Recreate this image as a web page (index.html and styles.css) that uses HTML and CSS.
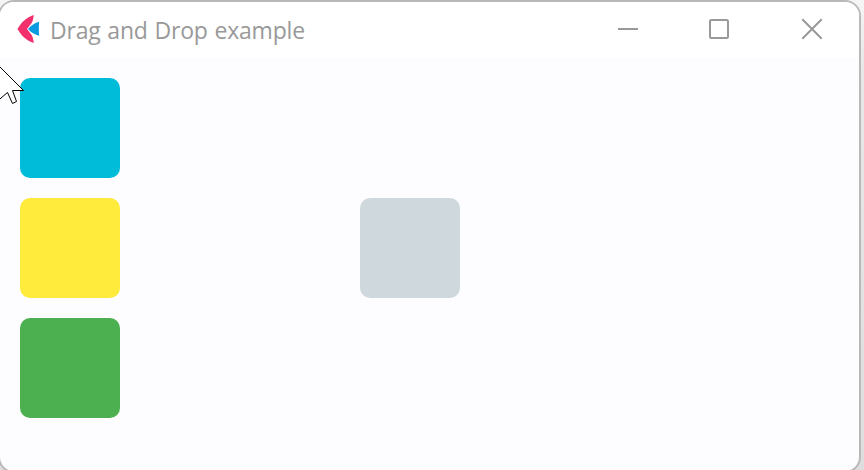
FILE: index.html
```html
<!DOCTYPE html>
<html lang="en">
<head>
<meta charset="utf-8">
<title>Drag and Drop example</title>
<link rel="stylesheet" href="styles.css">
</head>
<body>
<div class="window">
  <header class="titlebar">
    <svg class="logo" width="24" height="30" viewBox="0 0 24 30">
      <path fill="#f2306b" d="M16.800 1C9.500 3.500 4 8.500.5 15C4 21.500 9.500 26.500 16.800 29C16.500 26 15.800 23.500 15 21.500L10 15L15 8.500C15.800 6.500 16.500 4 16.800 1z"/>
      <path fill="#0c9ae0" d="M11 15C14 11.500 18 8.700 22.200 7.700C21.700 12.500 21.700 17.500 22.200 21.800C18 20.800 14 18.500 11 15z"/>
    </svg>
    <h1 class="title">Drag and Drop example</h1>
    <div class="controls">
      <svg width="22" height="22" viewBox="0 0 22 22"><path d="M1 11h20"/></svg>
      <svg width="22" height="22" viewBox="0 0 22 22"><rect x="1" y="2" width="18" height="18" rx="1.500"/></svg>
      <svg width="22" height="22" viewBox="0 0 22 22"><path d="M1.300 1.300l19.400 19.400M20.700 1.300L1.300 20.700"/></svg>
    </div>
  </header>
  <main class="content">
    <div class="sources">
      <div class="tile cyan"></div>
      <div class="tile yellow"></div>
      <div class="tile green"></div>
    </div>
    <div class="tile target"></div>
  </main>
</div>
<svg class="cursor" width="26" height="46" viewBox="0 0 26 46">
  <path d="M-2.500 4.500L23.500 30.500H12.500L16.500 41.500L12.500 43.500L7.500 32.500L-2.500 41z"/>
</svg>
</body>
</html>
```
FILE: styles.css
```css
* { box-sizing: border-box; }
body {
  margin: 0;
  height: 470px;
  overflow: hidden;
  background: linear-gradient(#f5f5f5, #e8e8e8 60px, #dedede);
}
.window {
  width: 863px;
  height: 473px;
  margin-left: -2px;
  border: 2px solid #b9b9b9;
  border-radius: 16px;
  background: #fdfdff;
  overflow: hidden;
}
.titlebar {
  display: flex;
  height: 56px;
  padding: 0 36px 0 17px;
  background: #fff;
}
.logo { margin-top: 12px; }
.title {
  margin: 0 0 0 9px;
  font: 400 23px/56px "Open Sans", "Noto Sans", sans-serif;
  letter-spacing: -0.2px;
  word-spacing: 1px;
  color: #999;
  white-space: nowrap;
}
.controls {
  display: flex;
  gap: 70px;
  margin: 16px 0 0 auto;
}
.controls svg {
  fill: none;
  stroke: #999;
  stroke-width: 2;
}
.content {
  display: flex;
  align-items: center;
  gap: 240px;
  padding: 20px;
}
.sources {
  display: flex;
  flex-direction: column;
  gap: 20px;
}
.tile {
  width: 100px;
  height: 100px;
  border-radius: 10px;
}
.cyan { background: #00bcd8; }
.yellow { background: #ffeb3b; }
.green { background: #4caf50; }
.target { background: #cfd8dd; }
.cursor {
  position: absolute;
  left: 0;
  top: 60px;
  fill: #fff;
  stroke: #000;
  stroke-width: 1;
}
```
